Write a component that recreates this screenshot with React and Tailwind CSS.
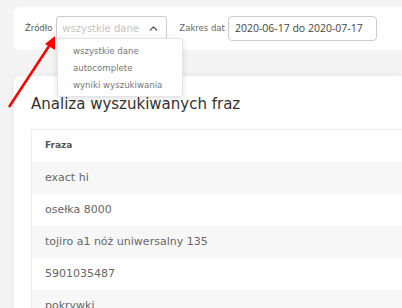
import { ChevronUp } from "lucide-react";

const rows = [
  "exact hi",
  "osełka 8000",
  "tojiro a1 nóż uniwersalny 135",
  "5901035487",
  "pokrywki",
];

export default function App() {
  return (
    <div
      className="relative w-[402px] h-[308px] overflow-hidden bg-[#f4f4f4]"
      style={{ fontFamily: '"DejaVu Sans", sans-serif' }}
    >
      {/* filtry */}
      <div className="ml-[14px] mt-[7px] h-[43px] bg-white rounded-l-[6px] flex items-center pl-[11px]">
        <span className="text-[8.5px] text-[#555] mr-[4px]">Źródło</span>
        <div className="w-[111px] h-[25px] border border-[#ccc] rounded-[3px] flex items-center justify-between pl-[5px] pr-[6px]">
          <span className="text-[10px] text-[#c4c4c4]">wszystkie dane</span>
          <ChevronUp size={13} strokeWidth={2.2} className="text-[#444]" />
        </div>
        <span className="text-[8.5px] text-[#666] ml-[12px] mr-[3px]">Zakres dat</span>
        <div className="w-[149px] h-[25px] border border-[#ccc] rounded-[4px] flex items-center pl-[6px]">
          <span
            className="text-[10.5px] text-[#444]"
            style={{ fontFamily: '"Open Sans", sans-serif' }}
          >
            2020-06-17 do 2020-07-17
          </span>
        </div>
      </div>

      {/* karta z tabelą */}
      <div className="ml-[14px] mt-[26px] h-[240px] bg-white rounded-tl-[6px] pl-[17px] shadow-[0_0_10px_rgba(0,0,0,0.06)]">
        <div className="h-[53px] flex items-center pt-[3px]">
          <h2 className="text-[15px] text-[#333]">Analiza wyszukiwanych fraz</h2>
        </div>
        <div className="border-t border-l border-[#eee]">
          <div className="h-[32px] flex items-center pl-[13px] text-[9px] font-bold text-[#555]">
            Fraza
          </div>
          {rows.map((r, i) => (
            <div
              key={r}
              className={
                "h-[32px] flex items-center pl-[13px] text-[11px] text-[#666] " +
                (i % 2 === 0 ? "bg-[#f7f7f7]" : "bg-white")
              }
            >
              {r}
            </div>
          ))}
        </div>
      </div>

      {/* rozwinięta lista */}
      <div className="absolute left-[57px] top-[38px] w-[126px] h-[59px] bg-white border border-[#e4e4e4] rounded-[3px] shadow-[0_2px_6px_rgba(0,0,0,0.12)] pt-[4px] pl-[15px]">
        {["wszystkie dane", "autocomplete", "wyniki wyszukiwania"].map((t) => (
          <div key={t} className="h-[17px] flex items-center text-[8.6px] text-[#777]">
            {t}
          </div>
        ))}
      </div>

      {/* strzałka */}
      <svg className="absolute left-0 top-0" width="402" height="308">
        <line x1="9" y1="107" x2="51" y2="43" stroke="#f00" strokeWidth="2.5" />
        <polygon points="55,36 55,50 45,44" fill="#f00" />
      </svg>
    </div>
  );
}
